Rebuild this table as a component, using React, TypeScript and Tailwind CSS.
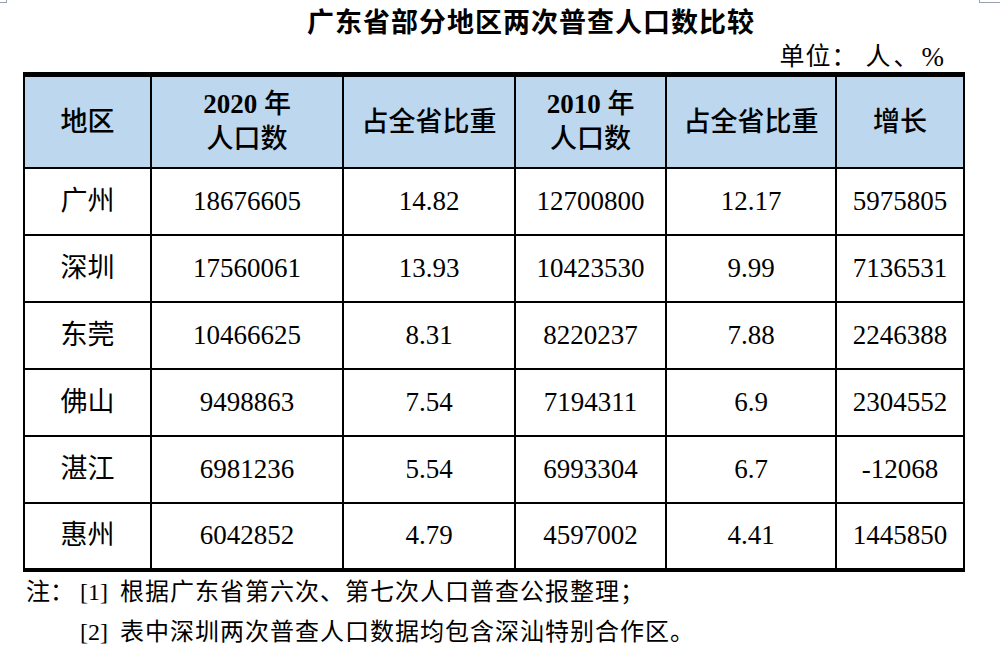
import React from "react";

const rows: string[][] = [
  ["广州", "18676605", "14.82", "12700800", "12.17", "5975805"],
  ["深圳", "17560061", "13.93", "10423530", "9.99", "7136531"],
  ["东莞", "10466625", "8.31", "8220237", "7.88", "2246388"],
  ["佛山", "9498863", "7.54", "7194311", "6.9", "2304552"],
  ["湛江", "6981236", "5.54", "6993304", "6.7", "-12068"],
  ["惠州", "6042852", "4.79", "4597002", "4.41", "1445850"],
];

export default function App() {
  return (
    <div className="relative w-[1000px] h-[664px] bg-white text-black overflow-hidden font-['Liberation_Serif','Noto_Sans_CJK_SC',serif]">
      <div className="absolute left-0 top-0 w-[7px] h-[3px] border-b border-r border-gray-400" />
      <div className="absolute left-[979px] top-0 w-[21px] h-[3px] border-b border-l border-gray-400" />

      <div className="h-[42px] pl-[307px] flex items-center text-[27px] leading-[42px] font-bold tracking-[1px] font-['Noto_Sans_CJK_SC',sans-serif]">
        广东省部分地区两次普查人口数比较
      </div>
      <div className="h-[30px] flex justify-end pr-[56px] items-center text-[25px] leading-[30px]">
        <span className="tracking-[1px]">单位：</span>
        <span className="ml-[8px] tracking-[3px]">人、</span>
        <span className="text-[27px]">%</span>
      </div>

      <table className="ml-[23px] w-[940px] table-fixed border-collapse text-[27px]">
        <colgroup>
          <col className="w-[127px]" />
          <col className="w-[192px]" />
          <col className="w-[172px]" />
          <col className="w-[151px]" />
          <col className="w-[170px]" />
          <col className="w-[128px]" />
        </colgroup>
        <thead>
          <tr className="h-[93px] bg-[#bdd7ee] border-t-[5px] border-black">
            <th className="border-2 border-black font-medium">地区</th>
            <th className="border-2 border-black font-medium leading-[35px]">
              <span className="font-bold">2020</span> 年<br />人口数
            </th>
            <th className="border-2 border-black font-medium">占全省比重</th>
            <th className="border-2 border-black font-medium leading-[35px]">
              <span className="font-bold">2010</span> 年<br />人口数
            </th>
            <th className="border-2 border-black font-medium">占全省比重</th>
            <th className="border-2 border-black font-medium">增长</th>
          </tr>
        </thead>
        <tbody>
          {rows.map((r, i) => (
            <tr
              key={i}
              className={
                i === rows.length - 1
                  ? "h-[67px] border-b-[4px] border-black"
                  : "h-[67px]"
              }
            >
              {r.map((c, j) => (
                <td key={j} className="border-2 border-black text-center">
                  {c}
                </td>
              ))}
            </tr>
          ))}
        </tbody>
      </table>

      <div className="flex pl-[26px] text-[24px] leading-[40px]">
        <div className="w-[54px]">注：</div>
        <div className="flex flex-col">
          <div className="flex">
            <span className="w-[40px]">[1]</span>
            <span className="tracking-[1px]">根据广东省第六次、第七次人口普查公报整理；</span>
          </div>
          <div className="flex">
            <span className="w-[40px]">[2]</span>
            <span className="tracking-[1px]">表中深圳两次普查人口数据均包含深汕特别合作区。</span>
          </div>
        </div>
      </div>
    </div>
  );
}
